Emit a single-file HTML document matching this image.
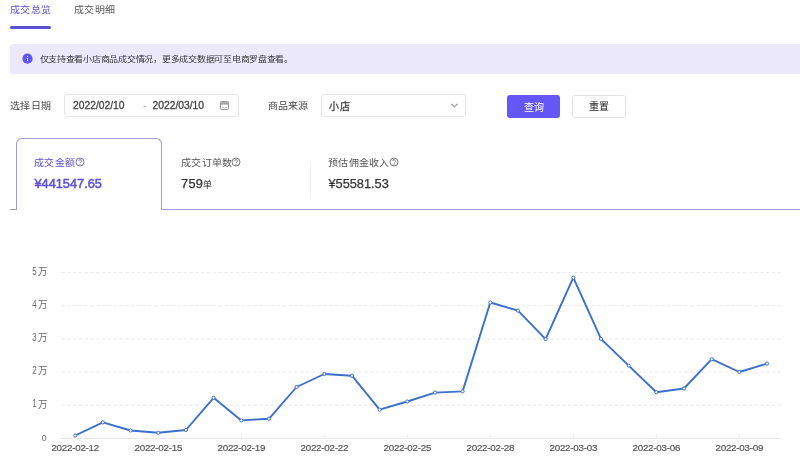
<!DOCTYPE html>
<html lang="zh-CN"><head><meta charset="utf-8">
<style>
*{margin:0;padding:0;box-sizing:border-box}
html,body{width:800px;height:461px;overflow:hidden;background:#fff;font-family:"Liberation Sans",sans-serif;color:#333}
.a{position:absolute;white-space:nowrap}
.wrap{position:absolute;left:0;top:0;width:800px;height:461px;will-change:transform}
.tab1{left:10px;top:1.5px;font-size:10px;letter-spacing:0.25px;color:#5a50d2}
.tab2{left:74px;top:1.5px;font-size:10px;letter-spacing:0.25px;color:#555}
.ul{left:10px;top:26px;width:41px;height:2.6px;border-radius:2px;background:#5b50d6}
.alert{left:10px;top:44px;width:800px;height:29.7px;background:#ece9fd;border-radius:3px}
.at{left:39.5px;top:53.3px;font-size:9px;font-weight:500;letter-spacing:-0.26px;color:#333;transform:scaleY(0.88);transform-origin:0 2px}
.lbl{font-size:10px;letter-spacing:0.25px;color:#444}
.inp{border:1px solid #e6e6e6;border-radius:3px;background:#fff}
.val{font-size:10.3px;color:#454545;-webkit-text-stroke-width:0.3px}
.btnp{left:507px;top:95px;width:53px;height:23px;background:#6557f5;border-radius:3px;color:#fff;font-size:10px;font-weight:500;text-align:center;line-height:25px}
.btnd{left:572px;top:95px;width:54px;height:23px;border:1px solid #e3e3e3;border-radius:3px;color:#222;font-size:10px;font-weight:500;text-align:center;line-height:21px}
.card{left:16px;top:137.5px;width:146px;height:72.5px;border:1px solid #a09bd0;border-bottom:none;border-radius:6px 6px 0 0;background:#fff}
.bl{height:1px;background:#a09bd0;top:209px}
.mt{font-size:10px;letter-spacing:0.25px;color:#555}
.mv{font-size:12.75px;color:#333;-webkit-text-stroke-width:0.25px}
svg text{font-family:"Liberation Sans",sans-serif}
.tab1,.tab2,.lbl,.mt{transform:scaleY(0.91);transform-origin:0 3.3px}
</style></head><body><div class="wrap">
<div class="a tab1">成交总览</div>
<div class="a tab2">成交明细</div>
<div class="a ul"></div>
<div class="a alert"></div>
<svg class="a" style="left:22px;top:53px" width="11" height="11" viewBox="0 0 11 11"><circle cx="5.5" cy="5.7" r="5.1" fill="#6057ef"/><rect x="5.05" y="3.1" width="0.9" height="0.9" fill="#fff" opacity="0.85"/><rect x="5.05" y="4.9" width="0.9" height="3.2" fill="#fff" opacity="0.85"/></svg>
<div class="a at">仅支持查看小店商品成交情况，更多成交数据可至电商罗盘查看。</div>

<div class="a lbl" style="left:10px;top:97.5px">选择日期</div>
<div class="a inp" style="left:63.5px;top:94px;width:175px;height:23px"></div>
<div class="a val" style="left:73px;top:100px">2022/02/10</div>
<div class="a val" style="left:143px;top:99.5px;color:#aaa;-webkit-text-stroke-width:0">-</div>
<div class="a val" style="left:152.5px;top:100px">2022/03/10</div>
<svg class="a" style="left:219px;top:100px" width="11" height="11" viewBox="0 0 11 11"><rect x="1.5" y="1.5" width="8" height="8" rx="1.3" fill="none" stroke="#8a8a8a" stroke-width="0.9"/><rect x="1.5" y="1.8" width="8" height="2.2" fill="#b0b0b0"/><line x1="1.5" y1="4.2" x2="9.5" y2="4.2" stroke="#8a8a8a" stroke-width="0.8"/><rect x="3.4" y="6.8" width="1.4" height="0.9" fill="#999"/><rect x="6.2" y="6.8" width="1.4" height="0.9" fill="#999"/></svg>

<div class="a lbl" style="left:267.5px;top:97.5px">商品来源</div>
<div class="a inp" style="left:320.5px;top:94px;width:145px;height:23px"></div>
<div class="a val" style="left:329px;top:97.5px;font-size:10px;letter-spacing:0.5px">小店</div>
<svg class="a" style="left:450px;top:102px" width="9" height="7" viewBox="0 0 9 7"><polyline points="1.3,1.9 4.5,4.7 7.7,1.9" fill="none" stroke="#999" stroke-width="1.15"/></svg>

<div class="a btnp">查询</div>
<div class="a btnd">重置</div>

<div class="a bl" style="left:10px;width:7px"></div>
<div class="a bl" style="left:161px;width:639px"></div>
<div class="a card"></div>
<div class="a mt" style="left:34px;top:155px;color:#5a50d2">成交金额</div>
<svg class="a" style="left:75.1px;top:157.3px" width="10" height="10" viewBox="0 0 10 10"><circle cx="5" cy="5" r="4.0" fill="none" stroke="#7670c8" stroke-width="0.95"/><path d="M3.7 4.0a1.35 1.35 0 1 1 2.0 1.2c-.45.3-.7.5-.7 1.1" fill="none" stroke="#7670c8" stroke-width="0.9"/><circle cx="5" cy="7.45" r="0.55" fill="#7670c8"/></svg>
<div class="a mv" style="left:34.5px;top:175.6px;color:#5b50d6;-webkit-text-stroke-width:0.5px">¥441547.65</div>
<div class="a mt" style="left:181px;top:155px">成交订单数</div>
<svg class="a" style="left:230.9px;top:157.3px" width="10" height="10" viewBox="0 0 10 10"><circle cx="5" cy="5" r="4.0" fill="none" stroke="#707070" stroke-width="0.95"/><path d="M3.7 4.0a1.35 1.35 0 1 1 2.0 1.2c-.45.3-.7.5-.7 1.1" fill="none" stroke="#707070" stroke-width="0.9"/><circle cx="5" cy="7.45" r="0.55" fill="#707070"/></svg>
<div class="a mv" style="left:181px;top:175.6px"><span style="letter-spacing:0.3px">759</span><span style="font-size:9px;-webkit-text-stroke-width:0">单</span></div>
<div class="a" style="left:310px;top:163px;width:1px;height:35px;background:#f0f0f0"></div>
<div class="a mt" style="left:328px;top:155px">预估佣金收入</div>
<svg class="a" style="left:388.6px;top:157.3px" width="10" height="10" viewBox="0 0 10 10"><circle cx="5" cy="5" r="4.0" fill="none" stroke="#707070" stroke-width="0.95"/><path d="M3.7 4.0a1.35 1.35 0 1 1 2.0 1.2c-.45.3-.7.5-.7 1.1" fill="none" stroke="#707070" stroke-width="0.9"/><circle cx="5" cy="7.45" r="0.55" fill="#707070"/></svg>
<div class="a mv" style="left:328.5px;top:175.6px">¥55581.53</div>

<svg class="a" style="left:0;top:0" width="800" height="461" viewBox="0 0 800 461">
<g stroke="#eaeaea" stroke-width="1" stroke-dasharray="3.6,2.226"><line x1="61.1" y1="272.6" x2="781" y2="272.6"/><line x1="61.1" y1="305.7" x2="781" y2="305.7"/><line x1="61.1" y1="338.9" x2="781" y2="338.9"/><line x1="61.1" y1="372.0" x2="781" y2="372.0"/><line x1="61.1" y1="405.2" x2="781" y2="405.2"/></g>
<line x1="60.5" y1="438.5" x2="781" y2="438.5" stroke="#e8e8e8" stroke-width="1"/>
<g stroke="#ededed" stroke-width="1"><line x1="75.2" y1="433.5" x2="75.2" y2="438.5"/><line x1="158.3" y1="433.5" x2="158.3" y2="438.5"/><line x1="241.3" y1="433.5" x2="241.3" y2="438.5"/><line x1="324.3" y1="433.5" x2="324.3" y2="438.5"/><line x1="407.3" y1="433.5" x2="407.3" y2="438.5"/><line x1="490.3" y1="433.5" x2="490.3" y2="438.5"/><line x1="573.3" y1="433.5" x2="573.3" y2="438.5"/><line x1="656.3" y1="433.5" x2="656.3" y2="438.5"/><line x1="739.3" y1="433.5" x2="739.3" y2="438.5"/></g>
<g font-size="10" fill="#6a6a6a"><text x="36.8" y="274.8" text-anchor="end" transform="translate(36.8 0) scale(0.8 1) translate(-36.8 0)">5</text><text x="37.7" y="275.0" font-size="9.5" transform="translate(0 275.0) scale(1 1.06) translate(0 -275.0)">万</text><text x="36.8" y="307.9" text-anchor="end" transform="translate(36.8 0) scale(0.8 1) translate(-36.8 0)">4</text><text x="37.7" y="308.1" font-size="9.5" transform="translate(0 308.1) scale(1 1.06) translate(0 -308.1)">万</text><text x="36.8" y="341.1" text-anchor="end" transform="translate(36.8 0) scale(0.8 1) translate(-36.8 0)">3</text><text x="37.7" y="341.3" font-size="9.5" transform="translate(0 341.3) scale(1 1.06) translate(0 -341.3)">万</text><text x="36.8" y="374.2" text-anchor="end" transform="translate(36.8 0) scale(0.8 1) translate(-36.8 0)">2</text><text x="37.7" y="374.4" font-size="9.5" transform="translate(0 374.4) scale(1 1.06) translate(0 -374.4)">万</text><text x="36.8" y="407.4" text-anchor="end" transform="translate(36.8 0) scale(0.8 1) translate(-36.8 0)">1</text><text x="37.7" y="407.6" font-size="9.5" transform="translate(0 407.6) scale(1 1.06) translate(0 -407.6)">万</text><text x="46.7" y="440.7" text-anchor="end" font-size="8.8">0</text></g>
<g font-size="9.8" letter-spacing="-0.25" fill="#555" stroke="#555" stroke-width="0.2"><text x="75.2" y="450.6" text-anchor="middle">2022-02-12</text><text x="158.3" y="450.6" text-anchor="middle">2022-02-15</text><text x="241.3" y="450.6" text-anchor="middle">2022-02-19</text><text x="324.3" y="450.6" text-anchor="middle">2022-02-22</text><text x="407.3" y="450.6" text-anchor="middle">2022-02-25</text><text x="490.3" y="450.6" text-anchor="middle">2022-02-28</text><text x="573.3" y="450.6" text-anchor="middle">2022-03-03</text><text x="656.3" y="450.6" text-anchor="middle">2022-03-06</text><text x="739.3" y="450.6" text-anchor="middle">2022-03-09</text></g>
<polyline points="75.2,435.5 102.9,422.4 130.6,430.5 158.3,432.7 185.9,430 213.6,397.8 241.3,420.4 268.9,418.8 296.6,387 324.3,374 352.0,375.7 379.6,409.7 407.3,401.5 435.0,392.6 462.6,391.4 490.3,302.5 518.0,310.6 545.6,339.1 573.3,277.7 601.0,338.9 628.7,365.6 656.3,392.2 684.0,388.5 711.7,359.2 739.3,372 767.0,363.6" fill="none" stroke="#3b6fcb" stroke-width="1.9" stroke-linejoin="round"/>
<g fill="#fff" stroke="#3b6fcb" stroke-width="1"><circle cx="75.2" cy="435.5" r="1.6"/><circle cx="102.9" cy="422.4" r="1.6"/><circle cx="130.6" cy="430.5" r="1.6"/><circle cx="158.3" cy="432.7" r="1.6"/><circle cx="185.9" cy="430" r="1.6"/><circle cx="213.6" cy="397.8" r="1.6"/><circle cx="241.3" cy="420.4" r="1.6"/><circle cx="268.9" cy="418.8" r="1.6"/><circle cx="296.6" cy="387" r="1.6"/><circle cx="324.3" cy="374" r="1.6"/><circle cx="352.0" cy="375.7" r="1.6"/><circle cx="379.6" cy="409.7" r="1.6"/><circle cx="407.3" cy="401.5" r="1.6"/><circle cx="435.0" cy="392.6" r="1.6"/><circle cx="462.6" cy="391.4" r="1.6"/><circle cx="490.3" cy="302.5" r="1.6"/><circle cx="518.0" cy="310.6" r="1.6"/><circle cx="545.6" cy="339.1" r="1.6"/><circle cx="573.3" cy="277.7" r="1.6"/><circle cx="601.0" cy="338.9" r="1.6"/><circle cx="628.7" cy="365.6" r="1.6"/><circle cx="656.3" cy="392.2" r="1.6"/><circle cx="684.0" cy="388.5" r="1.6"/><circle cx="711.7" cy="359.2" r="1.6"/><circle cx="739.3" cy="372" r="1.6"/><circle cx="767.0" cy="363.6" r="1.6"/></g>
</svg>
</div></body></html>
